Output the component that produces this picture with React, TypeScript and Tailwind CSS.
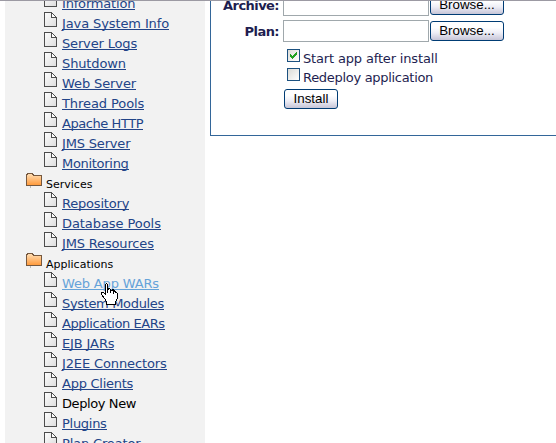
import React from "react";

const PageIcon = () => (
  <svg width="13" height="15" viewBox="0 0 13 15" className="mt-[2px] shrink-0" shapeRendering="crispEdges">
    <defs>
      <linearGradient id="page" x1="0" y1="0" x2="1" y2="1">
        <stop offset="0" stopColor="#ffffff" />
        <stop offset="1" stopColor="#dcdcdc" />
      </linearGradient>
    </defs>
    <path d="M.5 .5H7.5L12.5 5.5V14.5H.5Z" fill="url(#page)" stroke="#4d4d4d" />
    <path d="M7.5 1V5.5H12" fill="none" stroke="#4d4d4d" />
    <path d="M8 2h1v1h1v1h1v1H8z" fill="#ffffff" />
  </svg>
);

const FolderIcon = () => (
  <svg width="16" height="15" viewBox="0 0 16 15" className="mt-[3px] shrink-0" shapeRendering="crispEdges">
    <defs>
      <linearGradient id="folder" x1="0" y1="0" x2="0" y2="1">
        <stop offset="0" stopColor="#ffe0b8" />
        <stop offset="1" stopColor="#ff9838" />
      </linearGradient>
    </defs>
    <path d="M.5 2.5L1.5 .5H6.5L7.5 2.5H15.5V12.5H.5Z" fill="url(#folder)" stroke="#75583f" />
    <path d="M4 13h1v2H4z" fill="#bbbbbb" />
  </svg>
);

type Item = { label: string; spacing?: string; kind?: "folder" | "current" | "hover" };

const items: Item[] = [
  { label: "Information", spacing: "tracking-[-0.18px]" },
  { label: "Java System Info", spacing: "tracking-[-0.11px]" },
  { label: "Server Logs", spacing: "tracking-[-0.16px]" },
  { label: "Shutdown", spacing: "tracking-[-0.12px]" },
  { label: "Web Server", spacing: "tracking-[-0.1px]" },
  { label: "Thread Pools", spacing: "tracking-[-0.08px]" },
  { label: "Apache HTTP", spacing: "tracking-[-0.44px]" },
  { label: "JMS Server", spacing: "tracking-[-0.17px]" },
  { label: "Monitoring", spacing: "tracking-[-0.3px]" },
  { label: "Services", kind: "folder" },
  { label: "Repository", spacing: "tracking-[-0.2px]" },
  { label: "Database Pools", spacing: "tracking-[-0.07px]" },
  { label: "JMS Resources", spacing: "tracking-[-0.16px]" },
  { label: "Applications", kind: "folder" },
  { label: "Web App WARs", kind: "hover", spacing: "tracking-[-0.16px]" },
  { label: "System Modules", spacing: "tracking-[-0.34px]" },
  { label: "Application EARs", spacing: "tracking-[-0.44px]" },
  { label: "EJB JARs", spacing: "tracking-[-0.12px]" },
  { label: "J2EE Connectors", spacing: "tracking-[-0.12px]" },
  { label: "App Clients", spacing: "tracking-[-0.26px]" },
  { label: "Deploy New", kind: "current", spacing: "tracking-[-0.4px]" },
  { label: "Plugins", spacing: "tracking-[-0.28px]" },
  { label: "Plan Creator", spacing: "tracking-[-0.16px]" },
];

function Row({ item }: { item: Item }) {
  if (item.kind === "folder")
    return (
      <li className="flex h-5 pl-[21px]">
        <FolderIcon />
        <span className="ml-1 mt-[5px] text-[11px] leading-[20px] text-black">{item.label}</span>
      </li>
    );
  const color =
    item.kind === "current"
      ? "text-black"
      : item.kind === "hover"
        ? "text-[#66a3d9] border-b border-[#66a3d9]"
        : "text-[#224488] border-b border-[#224488]";
  return (
    <li className="flex h-5 pl-[39px]">
      <PageIcon />
      <a className={"ml-[5px] mt-[4px] h-4 text-[13px] leading-[19px] " + color + " " + item.spacing}>{item.label}</a>
    </li>
  );
}

function Button({ children, width }: { children: string; width: string }) {
  return (
    <button
      className={
        "h-5 shrink-0 rounded-[3px] border border-[#003c74] bg-linear-to-b from-white from-30% via-[#eeeef6] via-60% to-[#c6c5d7] p-0 font-['Liberation_Sans',Arial,sans-serif] text-[13.33px] leading-[18px] text-black " +
        width
      }
    >
      {children}
    </button>
  );
}

function FileRow({ label }: { label: string }) {
  return (
    <div className="flex h-[22px]">
      <label className="w-[68px] pt-px text-right text-[13px] font-bold leading-[22px] tracking-[-0.55px]">{label}</label>
      <input className="ml-[4px] h-[22px] w-[146px] border border-[#a0a8ac] bg-white" />
      <div className="ml-[1px] mt-px flex">
        <Button width="w-[74px]">Browse...</Button>
      </div>
    </div>
  );
}

function Check({ label, text, checked }: { label: string; text: string; checked?: boolean }) {
  return (
    <div className="ml-[76px] flex h-[19px]">
      <span className="size-[13px] shrink-0 border border-[#1c5180] bg-linear-to-br from-[#dcdcd7] to-white">
        {checked && (
          <svg width="11" height="11" viewBox="0 0 11 11" shapeRendering="crispEdges">
            <path d="M2 4h1v1h1v1h1V5h1V4h1V3h1V2h1v3H8v1H7v1H6v1H5v1H4V8H3V7H2z" fill="#21a121" />
          </svg>
        )}
      </span>
      <span className={"ml-[3px] whitespace-nowrap text-[13px] leading-[19px] " + text}>{label}</span>
    </div>
  );
}

export default function App() {
  return (
    <div className="relative flex h-[443px] w-[556px] overflow-hidden bg-white font-['Verdana','DejaVu_Sans',sans-serif]">
      <nav className="ml-[5px] h-full w-[200px] shrink-0 overflow-hidden bg-[#f2f2f2]">
        <ul className="-mt-[10px] whitespace-nowrap">
          {items.map((item) => (
            <Row key={item.label} item={item} />
          ))}
        </ul>
      </nav>
      <main className="ml-[5px] h-[136px] flex-1 border-b border-l border-[#336699] text-[#1e1e50]">
        <div className="-mt-[6px] flex flex-col gap-1">
          <FileRow label="Archive:" />
          <FileRow label="Plan:" />
        </div>
        <div className="mt-[7px]">
          <Check label="Start app after install" text="tracking-[-0.16px]" checked />
          <Check label="Redeploy application" text="tracking-[-0.3px]" />
        </div>
        <div className="ml-[73px] mt-[2px] flex">
          <Button width="w-[54px]">Install</Button>
        </div>
      </main>
      <div className="absolute inset-x-0 top-0 h-px bg-[#9c9aa3]" />
      <svg className="absolute left-[101px] top-[283px]" width="17" height="22" viewBox="0 0 17 22" shapeRendering="crispEdges">
        <path
          d="M4.5 1.5L5.5 .5L6.5 1.5V6.5L8.5 5.5L10.5 7.5L12.5 6.5L13.5 8.5L15.5 9.5L16.5 10.5V15.5L14.5 18.5V21.5H5.5V18.5L3.5 15.5L.5 11.5V9.5H2.5L4.5 11.5Z"
          fill="#ffffff"
          stroke="#000000"
        />
        <path d="M6.5 6V10M9.5 7V10M12.5 8V11" stroke="#000000" fill="none" />
      </svg>
    </div>
  );
}
